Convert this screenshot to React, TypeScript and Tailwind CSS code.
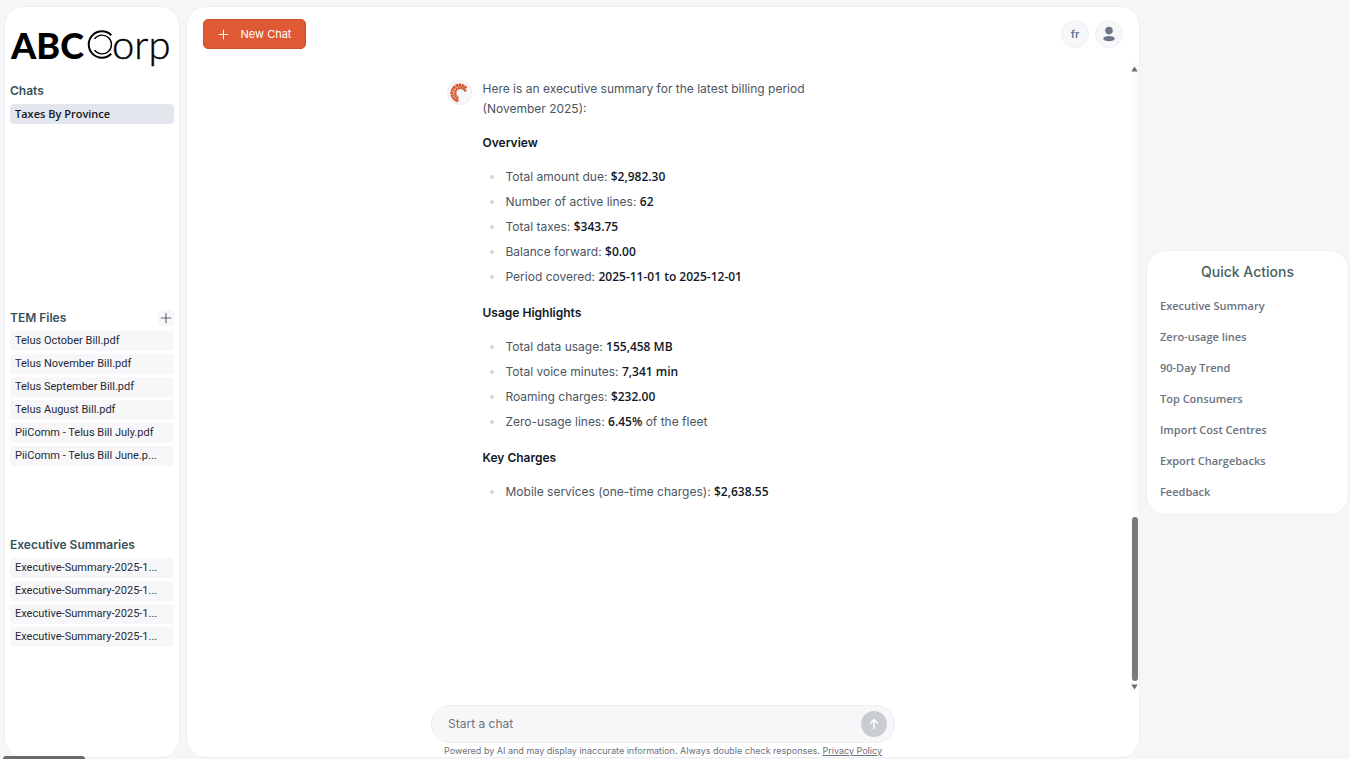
import type { ReactNode } from "react"

const chats = ["Taxes By Province"]

const temFiles = [
  "Telus October Bill.pdf",
  "Telus November Bill.pdf",
  "Telus September Bill.pdf",
  "Telus August Bill.pdf",
  "PiiComm - Telus Bill July.pdf",
  "PiiComm - Telus Bill June.p...",
]

const summaries = [
  "Executive-Summary-2025-1...",
  "Executive-Summary-2025-1...",
  "Executive-Summary-2025-1...",
  "Executive-Summary-2025-1...",
]

const quickActions = [
  "Executive Summary",
  "Zero-usage lines",
  "90-Day Trend",
  "Top Consumers",
  "Import Cost Centres",
  "Export Chargebacks",
  "Feedback",
]

type Line = { label: string; value: string; after?: string }

const report: { title: string; lines: Line[] }[] = [
  {
    title: "Overview",
    lines: [
      { label: "Total amount due:", value: "$2,982.30" },
      { label: "Number of active lines:", value: "62" },
      { label: "Total taxes:", value: "$343.75" },
      { label: "Balance forward:", value: "$0.00" },
      { label: "Period covered:", value: "2025-11-01 to 2025-12-01" },
    ],
  },
  {
    title: "Usage Highlights",
    lines: [
      { label: "Total data usage:", value: "155,458 MB" },
      { label: "Total voice minutes:", value: "7,341 min" },
      { label: "Roaming charges:", value: "$232.00" },
      { label: "Zero-usage lines:", value: "6.45%", after: "of the fleet" },
    ],
  },
  {
    title: "Key Charges",
    lines: [{ label: "Mobile services (one-time charges):", value: "$2,638.55" }],
  },
]

function PlusIcon({ size }: { size: number }) {
  return (
    <svg width={size} height={size} viewBox="0 0 12 12" fill="none" stroke="currentColor" strokeWidth="1.1" strokeLinecap="round">
      <path d="M6 1.2v9.6M1.2 6h9.6" />
    </svg>
  )
}

/** Company wordmark, the C of "Corp" is a double ring */
function Logo() {
  return (
    <svg className="w-full overflow-visible" viewBox="0 0 164 50" role="img" aria-label="ABC Corp">
      <text x="1" y="37" fontFamily="Lato, sans-serif" fontWeight="900" fontSize="36">ABC</text>
      <g fill="none" stroke="#000">
        <path d="M101.3 13.2A13.2 13.2 0 1 0 101.3 31.8" strokeWidth="2" />
        <path d="M84.5 16.9A9.4 9.4 0 1 1 84.5 28.1" strokeWidth="1.4" />
      </g>
      <text x="102" y="37" fontFamily="Lato, sans-serif" fontWeight="300" fontSize="40" stroke="#000" strokeWidth="0.4">orp</text>
    </svg>
  )
}

/** Assistant mark, segmented orange C */
function BotMark() {
  return (
    <svg width="20" height="20" viewBox="0 0 20 20" fill="none" stroke="#d4552f">
      <path d="M17.2 5.2A8 8 0 1 0 9.6 18" strokeWidth="3" strokeDasharray="2.6 .4" />
      <path d="M16.6 8.4A5.4 5.4 0 1 0 9.4 15.2" strokeWidth="2.6" strokeDasharray="2.1 .3" />
    </svg>
  )
}

function SideSection({ title, items, active, action, className = "" }: {
  title: string
  items: string[]
  active?: string
  action?: ReactNode
  className?: string
}) {
  return (
    <section className={className}>
      <div className="flex h-5 items-center justify-between">
        <h2 className="text-[12px] font-semibold text-[#37505a]">{title}</h2>
        {action}
      </div>
      <ul className="mt-[3px] flex flex-col gap-[3px]">
        {items.map((item, i) => (
          <li key={`${item}-${i}`}>
            <button
              className={`flex h-5 w-full items-center rounded pr-2 pl-[5px] text-left text-[11px] whitespace-nowrap ${
                item === active
                  ? "bg-[#e3e6ed] font-['Open_Sans',sans-serif] font-semibold text-[#111827]"
                  : "bg-[#f7f7f9] font-['Roboto',sans-serif] text-[#1f2937]"
              }`}
            >
              {item}
            </button>
          </li>
        ))}
      </ul>
    </section>
  )
}

function Sidebar() {
  return (
    <aside className="flex w-44 shrink-0 flex-col overflow-hidden rounded-[20px] border border-[#eef0f4] bg-white px-[5px]">
      <div className="h-[74px] shrink-0 pt-[15px]">
        <Logo />
      </div>
      <SideSection title="Chats" items={chats} active={chats[0]} className="h-[227px] shrink-0" />
      <SideSection
        title="TEM Files"
        items={temFiles}
        className="h-[227px] shrink-0"
        action={
          <button aria-label="Add file" className="flex h-4 w-4 items-center justify-center rounded bg-[#f7f7f9] text-[#5b6672]">
            <PlusIcon size={12} />
          </button>
        }
      />
      <SideSection title="Executive Summaries" items={summaries} />
    </aside>
  )
}

function Message() {
  return (
    <div className="mx-auto flex w-[424px] max-w-full gap-[11px] pt-4 text-[12px] leading-5 text-[#4b5563]">
      <div className="mt-px flex h-[25px] w-[25px] shrink-0 items-center justify-center rounded-full border border-[#e9ecf1] bg-[#f7f7f9]">
        <BotMark />
      </div>
      <div className="pr-8">
        <p>Here is an executive summary for the latest billing period (November 2025):</p>
        <div className="mt-3.5 flex flex-col gap-4">
          {report.map((block) => (
            <section key={block.title}>
              <h3 className="font-semibold text-[#111827]">{block.title}</h3>
              <ul className="mt-3.5 flex flex-col gap-[5px]">
                {block.lines.map((line) => (
                  <li key={line.label} className="flex items-center gap-3 pl-[7px]">
                    <span className="h-1 w-1 shrink-0 rounded-full bg-[#d1d5db]" />
                    <span>
                      {line.label}{" "}
                      <strong className="font-['Open_Sans',sans-serif] font-semibold text-[#111827]">{line.value}</strong>{" "}
                      {line.after}
                    </span>
                  </li>
                ))}
              </ul>
            </section>
          ))}
        </div>
      </div>
    </div>
  )
}

function ScrollRail() {
  return (
    <div aria-hidden="true" className="flex w-[9px] shrink-0 flex-col items-center bg-[#fcfcfd] py-[3px] text-[#6b6b6b]">
      <svg width="7" height="6" viewBox="0 0 7 6" fill="currentColor"><path d="M3.5.5 6.7 5.5H.3z" /></svg>
      <div className="flex-1" />
      <div className="mb-[3px] h-[164px] w-1.5 rounded-full bg-[#7b7b7b]" />
      <svg width="7" height="6" viewBox="0 0 7 6" fill="currentColor"><path d="M3.5 5.5.3.5h6.4z" /></svg>
    </div>
  )
}

function ChatPanel() {
  return (
    <main className="flex min-w-0 flex-1 flex-col overflow-hidden rounded-[20px] border border-[#eef0f4] bg-white">
      <header className="flex shrink-0 items-center justify-between px-4 pt-3 pb-[14px]">
        <button className="flex h-[30px] w-[103px] items-center justify-center gap-3 rounded-[5px] border border-[#cf4f2c] bg-[#df5a34] text-[11px] text-white">
          <PlusIcon size={11} />
          New Chat
        </button>
        <div className="flex gap-1.5">
          <button className="h-7 w-7 rounded-full border border-[#eceef2] bg-[#f7f7f9] text-[11px] font-semibold text-[#64748b]">fr</button>
          <button aria-label="Account" className="flex h-7 w-7 items-center justify-center rounded-full border border-[#eceef2] bg-[#f7f7f9] text-[#6b7686]">
            <svg width="14" height="16" viewBox="0 0 14 16" fill="currentColor">
              <circle cx="7" cy="4.6" r="3.8" />
              <ellipse cx="7" cy="12.7" rx="5.7" ry="2.6" />
            </svg>
          </button>
        </div>
      </header>

      <div className="flex min-h-0 flex-1">
        <div className="min-w-0 flex-1 overflow-hidden">
          <Message />
        </div>
        <ScrollRail />
      </div>

      <footer className="flex shrink-0 flex-col items-center pt-3">
        <form className="flex h-[38px] w-[464px] max-w-full items-center rounded-full border border-[#eceef2] bg-[#f7f7f9] pr-[7px] pl-4">
          <input
            aria-label="Start a chat"
            placeholder="Start a chat"
            className="min-w-0 flex-1 bg-transparent text-[12px] text-[#374151] outline-none placeholder:text-[#6b7280]"
          />
          <button type="button" aria-label="Send" className="flex h-[26px] w-[26px] items-center justify-center rounded-full bg-[#c9cdd3] text-white">
            <svg width="12" height="12" viewBox="0 0 12 12" fill="none" stroke="currentColor" strokeWidth="1.4" strokeLinecap="round" strokeLinejoin="round">
              <path d="M6 10.5V1.8M2.4 5.2 6 1.6l3.6 3.6" />
            </svg>
          </button>
        </form>
        <p className="pt-0.5 text-[9px] leading-3 text-[#6b7280]">
          Powered by AI and may display inaccurate information. Always double check responses.{" "}
          <a href="#privacy" className="underline">Privacy Policy</a>
        </p>
      </footer>
    </main>
  )
}

function QuickActions() {
  return (
    <aside className="w-[203px] shrink-0 self-center rounded-[20px] border border-[#eef0f4] bg-white px-[13px] pt-3 pb-1.5">
      <h2 className="text-center text-[14px] leading-[18px] font-medium text-[#47605f]">Quick Actions</h2>
      <ul className="mt-[10px]">
        {quickActions.map((action) => (
          <li key={action}>
            <button className="h-[31px] w-full text-left font-['Open_Sans',sans-serif] text-[11px] font-semibold text-[#6b7280]">{action}</button>
          </li>
        ))}
      </ul>
    </aside>
  )
}

export default function App() {
  return (
    <div className="relative flex h-screen gap-1.5 overflow-hidden bg-[#f6f6f9] pt-1.5 pr-px pb-px pl-1 font-['Inter',sans-serif]">
      <Sidebar />
      <ChatPanel />
      <QuickActions />
      <div aria-hidden="true" className="absolute bottom-0 left-[3px] h-[3px] w-[82px] rounded-t-sm bg-[#6b6b6b]" />
    </div>
  )
}
